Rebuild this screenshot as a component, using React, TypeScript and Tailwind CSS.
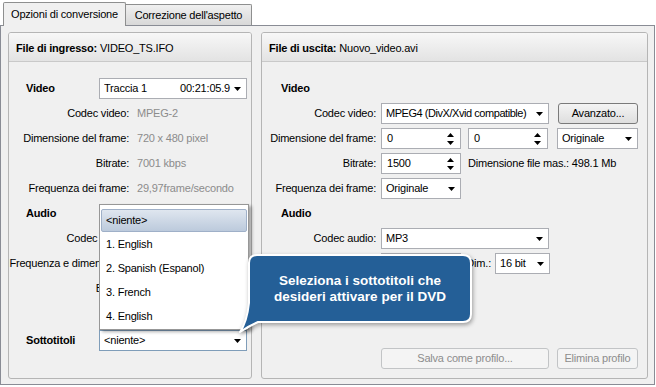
import React from "react";

function Arrow() {
  return (
    <svg width="7" height="4" viewBox="0 0 7 4" className="shrink-0">
      <path d="M0 0H7L3.5 4Z" fill="#000" />
    </svg>
  );
}

function SpinArrows() {
  return (
    <div className="flex flex-col gap-[4px] shrink-0">
      <svg width="7" height="4" viewBox="0 0 7 4">
        <path d="M0 4H7L3.5 0Z" fill="#000" />
      </svg>
      <svg width="7" height="4" viewBox="0 0 7 4">
        <path d="M0 0H7L3.5 4Z" fill="#000" />
      </svg>
    </div>
  );
}

function Select({
  className = "",
  children,
  blue = false,
}: {
  className?: string;
  children: React.ReactNode;
  blue?: boolean;
}) {
  return (
    <div
      className={`h-[21px] bg-white border ${
        blue ? "border-[#7f9db9]" : "border-[#abadb3]"
      } flex items-center pl-[4px] pr-[5px] shrink-0 ${className}`}
    >
      <div className="flex-1 flex items-center min-w-0 overflow-hidden whitespace-nowrap">{children}</div>
      <Arrow />
    </div>
  );
}

function Spinner({ className = "", value }: { className?: string; value: string }) {
  return (
    <div
      className={`h-[21px] bg-white border border-[#abadb3] flex items-center pl-[5px] pr-[6px] shrink-0 ${className}`}
    >
      <div className="flex-1">{value}</div>
      <SpinArrows />
    </div>
  );
}

function Button({
  className = "",
  children,
  disabled = false,
}: {
  className?: string;
  children: React.ReactNode;
  disabled?: boolean;
}) {
  return (
    <div
      className={`h-[21px] rounded-[3px] border flex items-center justify-center shrink-0 ${
        disabled
          ? "border-[#c2c4c6] bg-[#f4f4f4] text-[#8d8d8d]"
          : "border-[#7a7a7a] bg-gradient-to-b from-[#f4f4f4] to-[#dedede] text-black"
      } ${className}`}
    >
      {children}
    </div>
  );
}

function InfoRow({ label, value }: { label: string; value: string }) {
  return (
    <div className="h-[25px] flex items-center whitespace-nowrap">
      <div className="w-[120px] text-right shrink-0 flex justify-end overflow-visible">
        <span>{label}</span>
      </div>
      <span className="ml-[8px] text-[#8c8c8c]">{value}</span>
    </div>
  );
}

function RLabel({ children }: { children: React.ReactNode }) {
  return <div className="w-[114px] text-right shrink-0 whitespace-nowrap">{children}</div>;
}

function PanelHeader({ bold, rest }: { bold: string; rest: string }) {
  return (
    <div className="h-[29px] border-b border-[#c9c9c9] bg-gradient-to-b from-[#f7f7f7] to-[#e3e3e3] flex items-center pl-[7px] pt-[2px] rounded-t-[2px]">
      <span className="font-bold">{bold}</span>
      <span className="ml-[3px]">{rest}</span>
    </div>
  );
}

export default function App() {
  return (
    <div
      className="relative w-[656px] h-[387px] bg-white overflow-hidden text-[11px] tracking-[-0.2px] text-black leading-none"
      style={{ fontFamily: '"Liberation Sans", Arial, sans-serif' }}
    >
      {/* Tabs */}
      <div className="flex items-end h-[25px] pl-[3px]">
        <div className="relative z-10 -mb-px h-[24px] w-[123px] bg-[#f0f0f0] border border-b-0 border-[#8e8f8f] rounded-t-[2px] flex items-center justify-center pb-[1px]">
          Opzioni di conversione
        </div>
        <div className="h-[21px] w-[126px] bg-gradient-to-b from-[#f0f0f0] to-[#d8d8d8] border border-l-0 border-b-0 border-[#8e8f8f] rounded-tr-[2px] flex items-center justify-center">
          Correzione dell'aspetto
        </div>
      </div>

      {/* Content */}
      <div className="w-[655px] h-[360px] border border-[#898c95] bg-[#f0f0f0] flex gap-[9px] pl-[7px] pt-[6px]">
        {/* Left panel */}
        <div className="w-[244px] h-[347px] border border-[#b5b5b5] rounded-[3px] flex flex-col">
          <PanelHeader bold="File di ingresso:" rest="VIDEO_TS.IFO" />
          <div className="flex flex-col pt-[14px]">
            <div className="h-[25px] flex items-center">
              <span className="w-[90px] pl-[17px] font-bold shrink-0">Video</span>
              <Select className="w-[148px]">
                <span>Traccia 1</span>
                <span className="ml-auto mr-[4px]">00:21:05.9</span>
              </Select>
            </div>
            <InfoRow label="Codec video:" value="MPEG-2" />
            <InfoRow label="Dimensione del frame:" value="720 x 480 pixel" />
            <InfoRow label="Bitrate:" value="7001 kbps" />
            <InfoRow label="Frequenza dei frame:" value="29,97frame/secondo" />
            <div className="h-[25px] flex items-center">
              <span className="pl-[17px] font-bold">Audio</span>
            </div>
            <InfoRow label="Codec audio:" value="MP3" />
            <InfoRow label="Frequenza e dimensione:" value="48000 Hz, 16 bit" />
            <InfoRow label="Bitrate:" value="192 kbps" />
            <div className="h-[25px] flex items-center mt-[27px]">
              <span className="w-[90px] pl-[17px] font-bold shrink-0">Sottotitoli</span>
              <Select className="w-[148px]" blue>
                <span>&lt;niente&gt;</span>
              </Select>
            </div>
          </div>
        </div>

        {/* Right panel */}
        <div className="w-[387px] h-[347px] border border-[#b5b5b5] rounded-[3px] flex flex-col">
          <PanelHeader bold="File di uscita:" rest="Nuovo_video.avi" />
          <div className="flex-1 flex flex-col pt-[14px] pb-[9px]">
            <div className="h-[25px] flex items-center">
              <span className="pl-[19px] font-bold">Video</span>
            </div>
            <div className="h-[25px] flex items-center">
              <RLabel>Codec video:</RLabel>
              <Select className="ml-[5px] w-[168px]">
                <span className="tracking-[-0.45px]">MPEG4 (DivX/Xvid compatible)</span>
              </Select>
              <Button className="ml-[9px] w-[80px]">Avanzato...</Button>
            </div>
            <div className="h-[25px] flex items-center">
              <RLabel>Dimensione del frame:</RLabel>
              <Spinner className="ml-[5px] w-[80px]" value="0" />
              <Spinner className="ml-[7px] w-[80px]" value="0" />
              <Select className="ml-[9px] w-[81px]">Originale</Select>
            </div>
            <div className="h-[25px] flex items-center">
              <RLabel>Bitrate:</RLabel>
              <Spinner className="ml-[5px] w-[80px]" value="1500" />
              <span className="ml-[7px] whitespace-nowrap">Dimensione file mas.: 498.1 Mb</span>
            </div>
            <div className="h-[25px] flex items-center">
              <RLabel>Frequenza dei frame:</RLabel>
              <Select className="ml-[5px] w-[80px]">Originale</Select>
            </div>
            <div className="h-[25px] flex items-center">
              <span className="pl-[19px] font-bold">Audio</span>
            </div>
            <div className="h-[25px] flex items-center">
              <RLabel>Codec audio:</RLabel>
              <Select className="ml-[5px] w-[168px]">MP3</Select>
            </div>
            <div className="h-[25px] flex items-center">
              <RLabel>Frequenza:</RLabel>
              <Select className="ml-[5px] w-[80px]">44100 Hz</Select>
              <span className="w-[34px] text-right pr-[4px]">Dim.:</span>
              <Select className="w-[55px]">16 bit</Select>
            </div>
            <div className="mt-auto flex items-center">
              <Button disabled className="ml-[119px] w-[168px]">
                Salva come profilo...
              </Button>
              <Button disabled className="ml-[8px] w-[81px]">
                Elimina profilo
              </Button>
            </div>
          </div>
        </div>
      </div>

      {/* Dropdown list overlay */}
      <div className="absolute left-[99px] top-[204px] w-[150px] h-[126px] bg-white border border-[#979797] shadow-[3px_2px_3px_rgba(0,0,0,0.3)] flex flex-col">
        <div className="mx-[1px] mt-[4px] h-[23px] shrink-0 rounded-[2px] border border-[#9fb0c8] bg-gradient-to-b from-[#dfe6ef] to-[#bccadc] flex items-center pl-[4px]">
          &lt;niente&gt;
        </div>
        <div className="h-[24px] flex items-center pl-[6px]">1. English</div>
        <div className="h-[24px] flex items-center pl-[6px]">2. Spanish (Espanol)</div>
        <div className="h-[24px] flex items-center pl-[6px]">3. French</div>
        <div className="h-[24px] flex items-center pl-[6px]">4. English</div>
      </div>

      {/* Tooltip bubble */}
      <svg
        className="absolute left-[232px] top-[248px] drop-shadow-[1px_2px_2px_rgba(0,0,0,0.35)]"
        width="246"
        height="92"
        viewBox="0 0 246 92"
      >
        <path
          d="M25 7 H231 Q239 7 239 15 V66 Q239 74 231 74 H26 Q17 78 8 84 Q15 74 17 55 V15 Q17 7 25 7 Z"
          fill="#245f97"
          stroke="#ffffff"
          strokeWidth="2"
          strokeLinejoin="round"
        />
      </svg>
      <div className="absolute left-[249px] top-[255px] w-[222px] h-[67px] flex items-center justify-center text-center text-white font-bold text-[13.5px] leading-[16px] tracking-normal">
        Seleziona i sottotitoli che
        <br />
        desideri attivare per il DVD
      </div>
    </div>
  );
}
